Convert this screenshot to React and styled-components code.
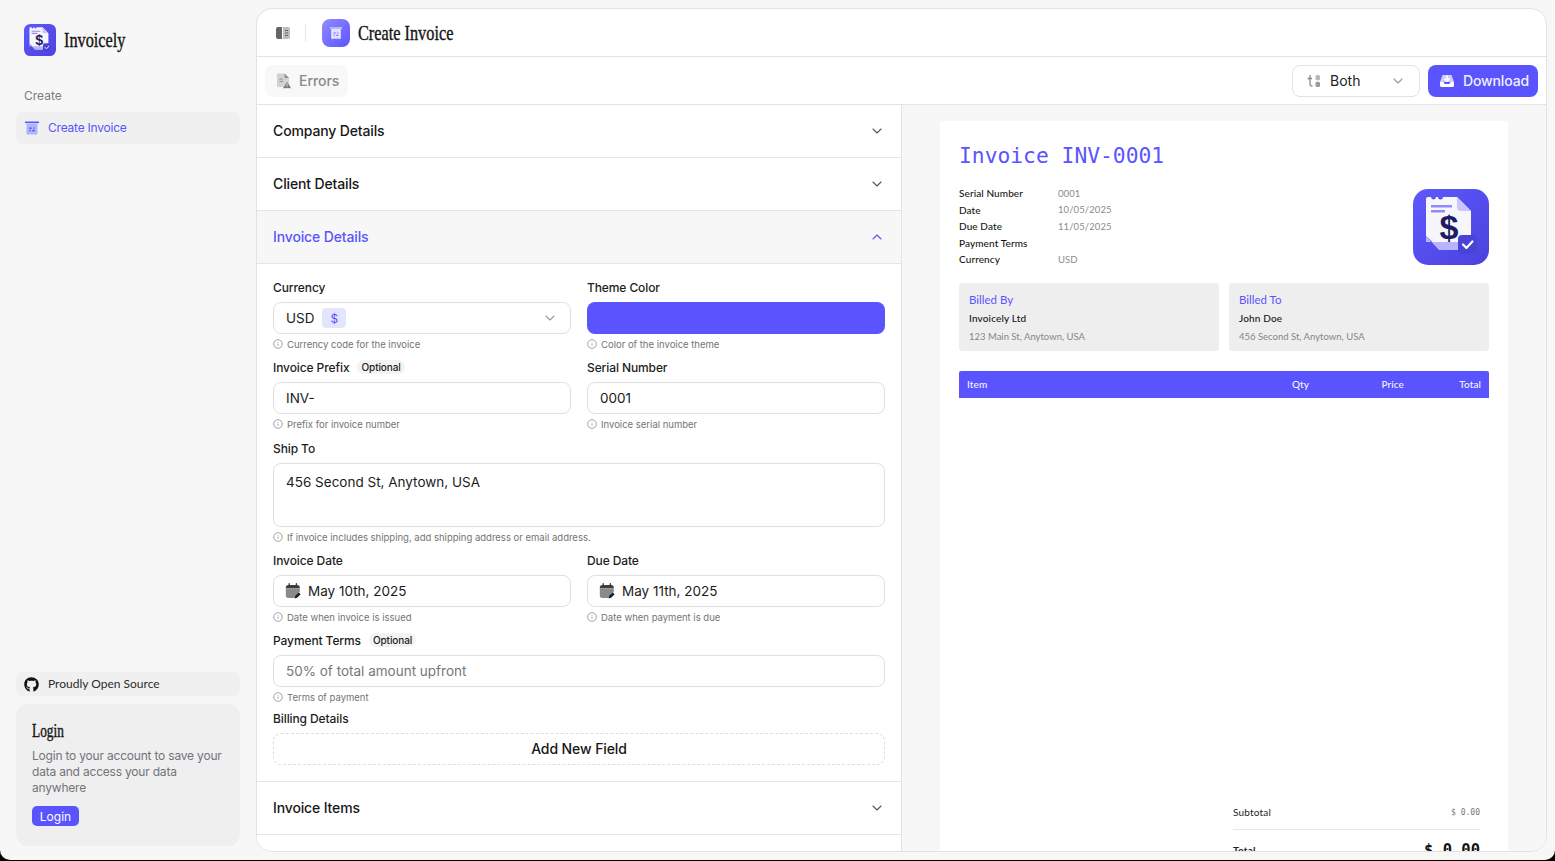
import React from "react";
import styled, { createGlobalStyle } from "styled-components";
import { ChevronDown, ChevronUp } from "lucide-react";
import { FaGithub } from "react-icons/fa";

const PURPLE = "#5a54ff";

const Global = createGlobalStyle`
  html, body { margin: 0; padding: 0; height: 100%; background: #000; overflow: hidden; }
  * { box-sizing: border-box; }
  #root { height: 860px; }
  body { font-family: "Inter", "Liberation Sans", sans-serif; color: #171717; }
`;

const Shell = styled.div`
  height: 860px;
  display: flex;
  background: #f7f7f7;
  border-radius: 0 0 10px 10px;
  overflow: hidden;
`;
const Sidebar = styled.aside`
  width: 256px;
  flex: none;
  display: flex;
  flex-direction: column;
  padding: 24px 16px 14px;
`;
const Brand = styled.div`
  display: flex;
  align-items: center;
  gap: 8px;
  padding-left: 8px;
  height: 32px;
`;
const SerifTitle = styled.span`
  font-family: "Liberation Serif", serif;
  font-size: ${p => p.$size || 22}px;
  color: #151515;
  -webkit-text-stroke: 0.4px #151515;
  display: inline-block;
  transform: scaleX(0.74);
  transform-origin: left center;
  white-space: nowrap;
`;
const GroupLabel = styled.div`
  font-size: 12px;
  color: #7c7c7c;
  margin: 32px 0 0 8px;
  line-height: 16px;
`;
const NavItem = styled.div`
  height: 32px;
  margin-top: 8px;
  background: #f0f0f0;
  border-radius: 8px;
  display: flex;
  align-items: center;
  gap: 8px;
  padding: 0 0 1px 8px;
  font-size: 12px;
  letter-spacing: -0.22px;
  color: ${PURPLE};
`;
const SideBottom = styled.div`
  margin-top: auto;
  display: flex;
  flex-direction: column;
  gap: 8px;
`;
const OpenSource = styled.div`
  height: 24px;
  background: #f0f0f0;
  border-radius: 8px;
  display: flex;
  align-items: center;
  gap: 9px;
  padding: 0 0 2px 8px;
  font-family: "Lato", sans-serif;
  font-size: 12px;
  color: #2c2c2c;
  svg { margin-top: 2px; }
`;
const LoginCard = styled.div`
  height: 142px;
  background: #efefef;
  border-radius: 12px;
  padding: 16px;
`;
const LoginTitle = styled.div`
  height: 22px;
  line-height: 22px;
  margin-bottom: 6px;
`;
const LoginText = styled.p`
  margin: 0;
  font-size: 12px;
  letter-spacing: -0.2px;
  line-height: 16px;
  color: #73737c;
`;
const LoginButton = styled.button`
  display: block;
  margin-top: 10px;
  width: 47px;
  height: 20px;
  padding: 0;
  border: 0;
  border-radius: 5px;
  background: ${PURPLE};
  color: #fff;
  font-family: inherit;
  font-size: 12px;
`;

const Main = styled.main`
  flex: 1;
  margin: 8px 8px 8px 0;
  background: #fff;
  border: 1px solid #e2e2e2;
  border-radius: 16px;
  display: flex;
  flex-direction: column;
  overflow: hidden;
`;
const Header = styled.header`
  height: 48px;
  flex: none;
  display: flex;
  align-items: center;
  padding-left: 19px;
  border-bottom: 1px solid #e4e4e4;
`;
const HeaderRule = styled.span`
  width: 1px;
  height: 18px;
  background: #e6e6e6;
  margin: 0 16px 0 15px;
`;
const PageTile = styled.span`
  width: 28px;
  height: 28px;
  border-radius: 8px;
  margin-right: 8px;
  display: flex;
  align-items: center;
  justify-content: center;
  background: linear-gradient(135deg, #918cff, #5a54ff);
`;
const Toolbar = styled.div`
  height: 48px;
  flex: none;
  display: flex;
  align-items: center;
  justify-content: space-between;
  padding: 0 8px;
  border-bottom: 1px solid #e4e4e4;
`;
const ErrorsButton = styled.div`
  width: 83px;
  height: 32px;
  border-radius: 8px;
  background: #f8f8f8;
  display: flex;
  align-items: center;
  gap: 7px;
  padding-left: 11px;
  font-size: 14px;
  font-weight: 500;
  letter-spacing: -0.05px;
  color: #8a8a8a;
`;
const ToolbarRight = styled.div`
  display: flex;
  gap: 8px;
`;
const ViewSelect = styled.div`
  width: 128px;
  height: 32px;
  border: 1px solid #e2e2e2;
  border-radius: 8px;
  display: flex;
  align-items: center;
  padding: 0 14px;
  font-size: 14px;
  color: #222;
  svg:first-child { margin-right: 9px; }
  svg:last-child { margin: 0 -1px 0 auto; }
`;
const DownloadButton = styled.div`
  width: 110px;
  height: 32px;
  border-radius: 8px;
  background: ${PURPLE};
  color: #f1f0ff;
  display: flex;
  align-items: center;
  gap: 8px;
  padding-left: 11px;
  font-size: 14px;
  font-weight: 500;
  letter-spacing: -0.14px;
`;

const Split = styled.div`
  flex: 1;
  min-height: 0;
  display: flex;
`;
const FormPane = styled.section`
  width: 645px;
  flex: none;
  border-right: 1px solid #e4e4e4;
  overflow: hidden;
`;
const AccordionHead = styled.div`
  height: 53px;
  display: flex;
  align-items: center;
  justify-content: space-between;
  padding: 0 16px 1px;
  border-bottom: 1px solid #e4e4e4;
  font-size: 14px;
  font-weight: 500;
  letter-spacing: -0.14px;
  color: ${p => (p.$open ? PURPLE : "#171717")};
  background: ${p => (p.$open ? "#f7f7f7" : "#fff")};
`;
const FormBody = styled.div`
  height: 518px;
  padding: 15px 16px 0;
  border-bottom: 1px solid #e4e4e4;
  display: grid;
  grid-template-columns: 298px 298px;
  column-gap: 16px;
  align-content: start;
  row-gap: 9px;
`;
const Field = styled.div`
  min-width: 0;
  grid-column: ${p => (p.$wide ? "1 / -1" : "auto")};
  margin-top: ${p => p.$nudge || 0}px;
`;
const Label = styled.label`
  display: flex;
  align-items: center;
  gap: 8px;
  height: 16px;
  margin-bottom: 7px;
  font-size: 12px;
  font-weight: 500;
  letter-spacing: -0.1px;
  color: #1d1d1d;
`;
const OptionalTag = styled.span`
  height: 14px;
  padding: 0 4px;
  border-radius: 7px;
  background: #f3f3f3;
  font-size: 10px;
  line-height: 14px;
`;
const Input = styled.div`
  height: ${p => p.$height || 32}px;
  border: 1px solid #e0e0e0;
  border-radius: 8px;
  display: flex;
  align-items: ${p => (p.$height ? "flex-start" : "center")};
  gap: 8px;
  padding: ${p => (p.$height ? "10px 12px" : "0 12px")};
  font-size: 13.5px;
  color: ${p => (p.$muted ? "#777" : "#1b1b1b")};
`;
const DateInput = styled(Input)`
  gap: 7px;
  padding: 0 11px;
`;
const CurrencyTag = styled.span`
  width: 24px;
  height: 20px;
  border-radius: 4px;
  background: #e5e4ff;
  color: ${PURPLE};
  font-size: 12px;
  display: flex;
  align-items: center;
  justify-content: center;
`;
const ColorBlock = styled.div`
  height: 32px;
  border-radius: 8px;
  background: ${PURPLE};
`;
const Help = styled.div`
  display: flex;
  align-items: center;
  gap: 4px;
  height: 12px;
  margin-top: 4px;
  font-size: 9.5px;
  color: #747474;
`;
const AddField = styled.div`
  height: 32px;
  border: 1px dashed #dedede;
  border-radius: 8px;
  display: flex;
  align-items: center;
  justify-content: center;
  padding-bottom: 2px;
  font-size: 14px;
  font-weight: 500;
  letter-spacing: -0.1px;
`;

const PreviewPane = styled.section`
  flex: 1;
  min-width: 0;
  background: #f7f7f7;
  padding: 16px 38px 0;
  overflow: hidden;
`;
const Page = styled.div`
  height: 790px;
  background: #fff;
  padding: 20px 19px 0;
  display: flex;
  flex-direction: column;
  font-family: "Lato", sans-serif;
`;
const InvoiceTitle = styled.div`
  font-family: "DejaVu Sans Mono", monospace;
  font-size: 21.3px;
  line-height: 30px;
  color: ${PURPLE};
`;
const MetaRow = styled.div`
  display: flex;
  justify-content: space-between;
  margin-top: 14px;
  height: 81px;
`;
const LogoSlot = styled.div`
  margin-top: 4px;
`;
const MetaGrid = styled.div`
  display: grid;
  grid-template-columns: 99px auto;
  grid-auto-rows: 16.5px;
  align-items: center;
  font-size: 10px;
  letter-spacing: 0.1px;
`;
const MetaKey = styled.span`
  color: #161616;
  font-weight: 500;
`;
const MetaValue = styled.span`
  color: #8b8b8b;
  font-size: 9.5px;
`;
const BillGrid = styled.div`
  display: grid;
  grid-template-columns: 1fr 1fr;
  gap: 10px;
  margin-top: 17px;
`;
const BillCard = styled.div`
  height: 68px;
  background: #eeeeee;
  border-radius: 3px;
  padding: 9px 10px;
`;
const BillHead = styled.div`
  font-size: 11.5px;
  line-height: 16px;
  color: ${PURPLE};
`;
const BillName = styled.div`
  font-size: 10px;
  font-weight: 500;
  letter-spacing: 0.15px;
  line-height: 12px;
  margin-top: 4px;
  color: #161616;
`;
const BillAddress = styled.div`
  font-size: 9.5px;
  line-height: 12px;
  margin-top: 7px;
  color: #868686;
`;
const TableHead = styled.div`
  height: 27px;
  margin-top: 20px;
  border-radius: 2px 2px 0 0;
  background: ${PURPLE};
  color: #f4f4ff;
  display: grid;
  grid-template-columns: 1fr 50px 95px 77px;
  align-items: center;
  padding: 0 8px 1px;
  font-size: 10px;
  font-weight: 500;
  letter-spacing: 0.1px;
`;
const HeadCell = styled.span`
  text-align: ${p => (p.$right ? "right" : "left")};
`;
const Summary = styled.div`
  margin: auto 9px 0 auto;
  width: 247px;
  padding-bottom: 52px;
`;
const SummaryRow = styled.div`
  display: flex;
  justify-content: space-between;
  align-items: center;
  height: 17px;
  padding-bottom: 1px;
  font-size: 10px;
  letter-spacing: 0.2px;
  color: #222;
`;
const SummaryRule = styled.div`
  height: 1px;
  background: #e8e8e8;
  margin: 8px 0 12px;
`;
const MonoAmount = styled.span`
  font-family: "DejaVu Sans Mono", monospace;
  font-size: ${p => p.$size}px;
  font-weight: ${p => p.$weight || 400};
  letter-spacing: 0;
  color: ${p => p.$color};
`;

// drawn icons
const LogoMark = ({ size }) => (
  <svg width={size} height={size} viewBox="0 0 76 76">
    <defs>
      <linearGradient id={`tile${size}`} x1="0" y1="0" x2="1" y2="1">
        <stop offset="0" stopColor="#5f58ff" />
        <stop offset="1" stopColor="#4a43dc" />
      </linearGradient>
    </defs>
    <rect width="76" height="76" rx="15" fill={`url(#tile${size})`} />
    <path d="M13 10q0-2 2-2h3a2.500 2.500 0 0 0 5 0h2a2.500 2.500 0 0 0 5 0h14l14 14v38H27L13 47z" fill="#f6f6fb" />
    <path d="M44 8l14 14H48q-4 0-4-4z" fill="#c9c6ff" />
    <path d="M13 47l13 14h19V53H13z" fill="#b7b3ff" />
    <path d="M18 16h21v2.600H18zM18 21h14v2.600H18z" fill="#8f8aff" />
    <text x="36" y="50" textAnchor="middle" fontFamily="Liberation Sans, sans-serif" fontWeight="700" fontSize="34" fill="#1f1c66">$</text>
    <rect x="45" y="46" width="19" height="19" rx="4" fill="#4a43d6" />
    <path d="M50 55.500l3.400 3.400 6-6.400" fill="none" stroke="#fff" strokeWidth="2.200" strokeLinecap="round" strokeLinejoin="round" />
  </svg>
);

const ReceiptIcon = ({ size = 16, body = "#b5b2ff", bar = PURPLE, line = PURPLE }) => (
  <svg width={size} height={size} viewBox="0 0 16 16">
    <rect x="1" y="1.500" width="14" height="1.600" fill={bar} />
    <path d="M2.500 3.500h11V14l-1.800 1-1.900-1-1.800 1-1.800-1-1.900 1-1.800-1z" fill={body} />
    <path d="M5 7.500h3v1.200H5zM9.500 7.500H11v1.200H9.500zM5 10h1.500v1.200H5zM8 10h3v1.200H8z" fill={line} />
  </svg>
);

const PanelIcon = () => (
  <svg width="14" height="12" viewBox="0 0 14 12" style={{ marginTop: 1 }}>
    <path d="M2 0h4v12H2a2 2 0 0 1-2-2V2a2 2 0 0 1 2-2z" fill="#666" />
    <path d="M7 0h5a2 2 0 0 1 2 2v8a2 2 0 0 1-2 2H7z" fill="#bdbdbd" />
    <path d="M9 3h3v1H9zM9 5.500h3v1H9zM9 8h3v1H9z" fill="#666" />
  </svg>
);

const ErrorIcon = () => (
  <svg width="16" height="16" viewBox="0 0 16 16">
    <path d="M1 1.500q0-1 1-1h6.500L13 5v8q0 1-1 1H2q-1 0-1-1z" fill="#d2d2d2" />
    <path d="M8.500.5L13 5H9.500q-1 0-1-1z" fill="#8f8f8f" />
    <path d="M3.500 5.500h3v1.100h-3zM3.500 8h3.500v1.100H3.500z" fill="#8f8f8f" />
    <path d="M11 7.800l4.600 7.700H6.400z" fill="#7a7a7a" stroke="#fff" strokeWidth=".6" />
    <path d="M10.600 10.200h.8v2.600h-.8zM10.600 13.300h.8v.8h-.8z" fill="#fff" />
  </svg>
);

const BothIcon = () => (
  <svg width="14" height="14" viewBox="0 0 14 14">
    <path d="M3 1v9.500q0 1.500 1.500 1.500H5.500M.5 4.500h4.500" fill="none" stroke="#8a8a8a" strokeWidth="1.300" />
    <rect x="8.500" y="1" width="4.500" height="5.200" rx="1.500" fill="#b8b8b8" />
    <rect x="8.500" y="7.800" width="4.500" height="5.200" rx="1.500" fill="#9a9a9a" />
  </svg>
);

const DownloadIcon = () => (
  <svg width="16" height="16" viewBox="0 0 16 16">
    <path d="M3.500 2h9L15 9H1z" fill="#cfcdff" />
    <path d="M1 9h3.600l1 2h4.800l1-2H15v3.500q0 1.500-1.500 1.500h-11Q1 14 1 12.500z" fill="#fff" />
    <path d="M8 3v5M5.800 6L8 8.200 10.200 6" fill="none" stroke="#fff" strokeWidth="1.600" strokeLinecap="round" strokeLinejoin="round" />
  </svg>
);

const CalendarIcon = () => (
  <svg width="16" height="16" viewBox="0 0 16 16">
    <path d="M.8 6h14v2.800L9.500 15H3.800q-3 0-3-2.500z" fill="#8a8a8a" />
    <path d="M3.500 2h8.500q2.800 0 2.800 2.500v1H.8v-1Q.8 2 3.500 2z" fill="#3c3c3c" />
    <path d="M4.200 .8v2.500M11.400 .8v2.500" stroke="#3c3c3c" strokeWidth="1.400" strokeLinecap="round" />
    <path d="M9.600 15.500l.7-2.700 3.500-3.300 1.800 1.700-3.500 3.500z" fill="#1e1e1e" />
  </svg>
);

const InfoIcon = () => (
  <svg width="10" height="10" viewBox="0 0 10 10">
    <circle cx="5" cy="5" r="4.300" fill="none" stroke="#8c8c8c" strokeWidth=".8" />
    <path d="M5 4.600v2M5 3.200v.6" stroke="#8c8c8c" strokeWidth=".8" />
  </svg>
);

const FormField = ({ label, optional, help, wide, nudge, children }) => (
  <Field $wide={wide} $nudge={nudge}>
    <Label>
      {label}
      {optional && <OptionalTag>Optional</OptionalTag>}
    </Label>
    {children}
    {help && (
      <Help>
        <InfoIcon />
        {help}
      </Help>
    )}
  </Field>
);

const Chevron = styled(ChevronDown).attrs({ size: 16, strokeWidth: 1.6 })`
  color: ${p => p.$color || "#555"};
`;

const metaRows = [
  ["Serial Number", "0001"],
  ["Date", "10/05/2025"],
  ["Due Date", "11/05/2025"],
  ["Payment Terms", ""],
  ["Currency", "USD"]
];

const App = () => (
  <Shell>
    <Global />
    <Sidebar>
      <Brand>
        <LogoMark size={32} />
        <SerifTitle $size={22}>Invoicely</SerifTitle>
      </Brand>
      <GroupLabel>Create</GroupLabel>
      <NavItem>
        <ReceiptIcon />
        Create Invoice
      </NavItem>
      <SideBottom>
        <OpenSource>
          <FaGithub size={15} color="#111" />
          Proudly Open Source
        </OpenSource>
        <LoginCard>
          <LoginTitle>
            <SerifTitle $size={18}>Login</SerifTitle>
          </LoginTitle>
          <LoginText>Login to your account to save your data and access your data anywhere</LoginText>
          <LoginButton>Login</LoginButton>
        </LoginCard>
      </SideBottom>
    </Sidebar>
    <Main>
      <Header>
        <PanelIcon />
        <HeaderRule />
        <PageTile>
          <ReceiptIcon size={14} body="#e3e2ff" bar="#d4d2ff" line="#7a75ff" />
        </PageTile>
        <SerifTitle $size={22}>Create Invoice</SerifTitle>
      </Header>
      <Toolbar>
        <ErrorsButton>
          <ErrorIcon />
          Errors
        </ErrorsButton>
        <ToolbarRight>
          <ViewSelect>
            <BothIcon />
            Both
            <Chevron $color="#999" />
          </ViewSelect>
          <DownloadButton>
            <DownloadIcon />
            Download
          </DownloadButton>
        </ToolbarRight>
      </Toolbar>
      <Split>
        <FormPane>
          <AccordionHead>
            Company Details
            <Chevron />
          </AccordionHead>
          <AccordionHead>
            Client Details
            <Chevron />
          </AccordionHead>
          <AccordionHead $open>
            Invoice Details
            <ChevronUp size={16} strokeWidth={1.6} />
          </AccordionHead>
          <FormBody>
            <FormField label="Currency" help="Currency code for the invoice">
              <Input>
                USD
                <CurrencyTag>$</CurrencyTag>
                <Chevron $color="#999" style={{ marginLeft: "auto" }} />
              </Input>
            </FormField>
            <FormField label="Theme Color" help="Color of the invoice theme">
              <ColorBlock />
            </FormField>
            <FormField label="Invoice Prefix" optional help="Prefix for invoice number">
              <Input>INV-</Input>
            </FormField>
            <FormField label="Serial Number" help="Invoice serial number">
              <Input>0001</Input>
            </FormField>
            <FormField wide nudge={1} label="Ship To" help="If invoice includes shipping, add shipping address or email address.">
              <Input $height={64}>456 Second St, Anytown, USA</Input>
            </FormField>
            <FormField label="Invoice Date" help="Date when invoice is issued">
              <DateInput>
                <CalendarIcon />
                May 10th, 2025
              </DateInput>
            </FormField>
            <FormField label="Due Date" help="Date when payment is due">
              <DateInput>
                <CalendarIcon />
                May 11th, 2025
              </DateInput>
            </FormField>
            <FormField wide label="Payment Terms" optional help="Terms of payment">
              <Input $muted>50% of total amount upfront</Input>
            </FormField>
            <FormField wide nudge={-2} label="Billing Details">
              <AddField>Add New Field</AddField>
            </FormField>
          </FormBody>
          <AccordionHead>
            Invoice Items
            <Chevron />
          </AccordionHead>
          <AccordionHead />
        </FormPane>
        <PreviewPane>
          <Page>
            <InvoiceTitle>Invoice INV-0001</InvoiceTitle>
            <MetaRow>
              <MetaGrid>
                {metaRows.map(([key, value]) => (
                  <React.Fragment key={key}>
                    <MetaKey>{key}</MetaKey>
                    <MetaValue>{value}</MetaValue>
                  </React.Fragment>
                ))}
              </MetaGrid>
              <LogoSlot>
                <LogoMark size={76} />
              </LogoSlot>
            </MetaRow>
            <BillGrid>
              <BillCard>
                <BillHead>Billed By</BillHead>
                <BillName>Invoicely Ltd</BillName>
                <BillAddress>123 Main St, Anytown, USA</BillAddress>
              </BillCard>
              <BillCard>
                <BillHead>Billed To</BillHead>
                <BillName>John Doe</BillName>
                <BillAddress>456 Second St, Anytown, USA</BillAddress>
              </BillCard>
            </BillGrid>
            <TableHead>
              <HeadCell>Item</HeadCell>
              <HeadCell $right>Qty</HeadCell>
              <HeadCell $right>Price</HeadCell>
              <HeadCell $right>Total</HeadCell>
            </TableHead>
            <Summary>
              <SummaryRow>
                Subtotal
                <MonoAmount $size={8} $color="#777">$ 0.00</MonoAmount>
              </SummaryRow>
              <SummaryRule />
              <SummaryRow>
                <strong>Total</strong>
                <MonoAmount $size={15.5} $weight={700} $color="#111">$ 0.00</MonoAmount>
              </SummaryRow>
            </Summary>
          </Page>
        </PreviewPane>
      </Split>
    </Main>
  </Shell>
);

export default App;
